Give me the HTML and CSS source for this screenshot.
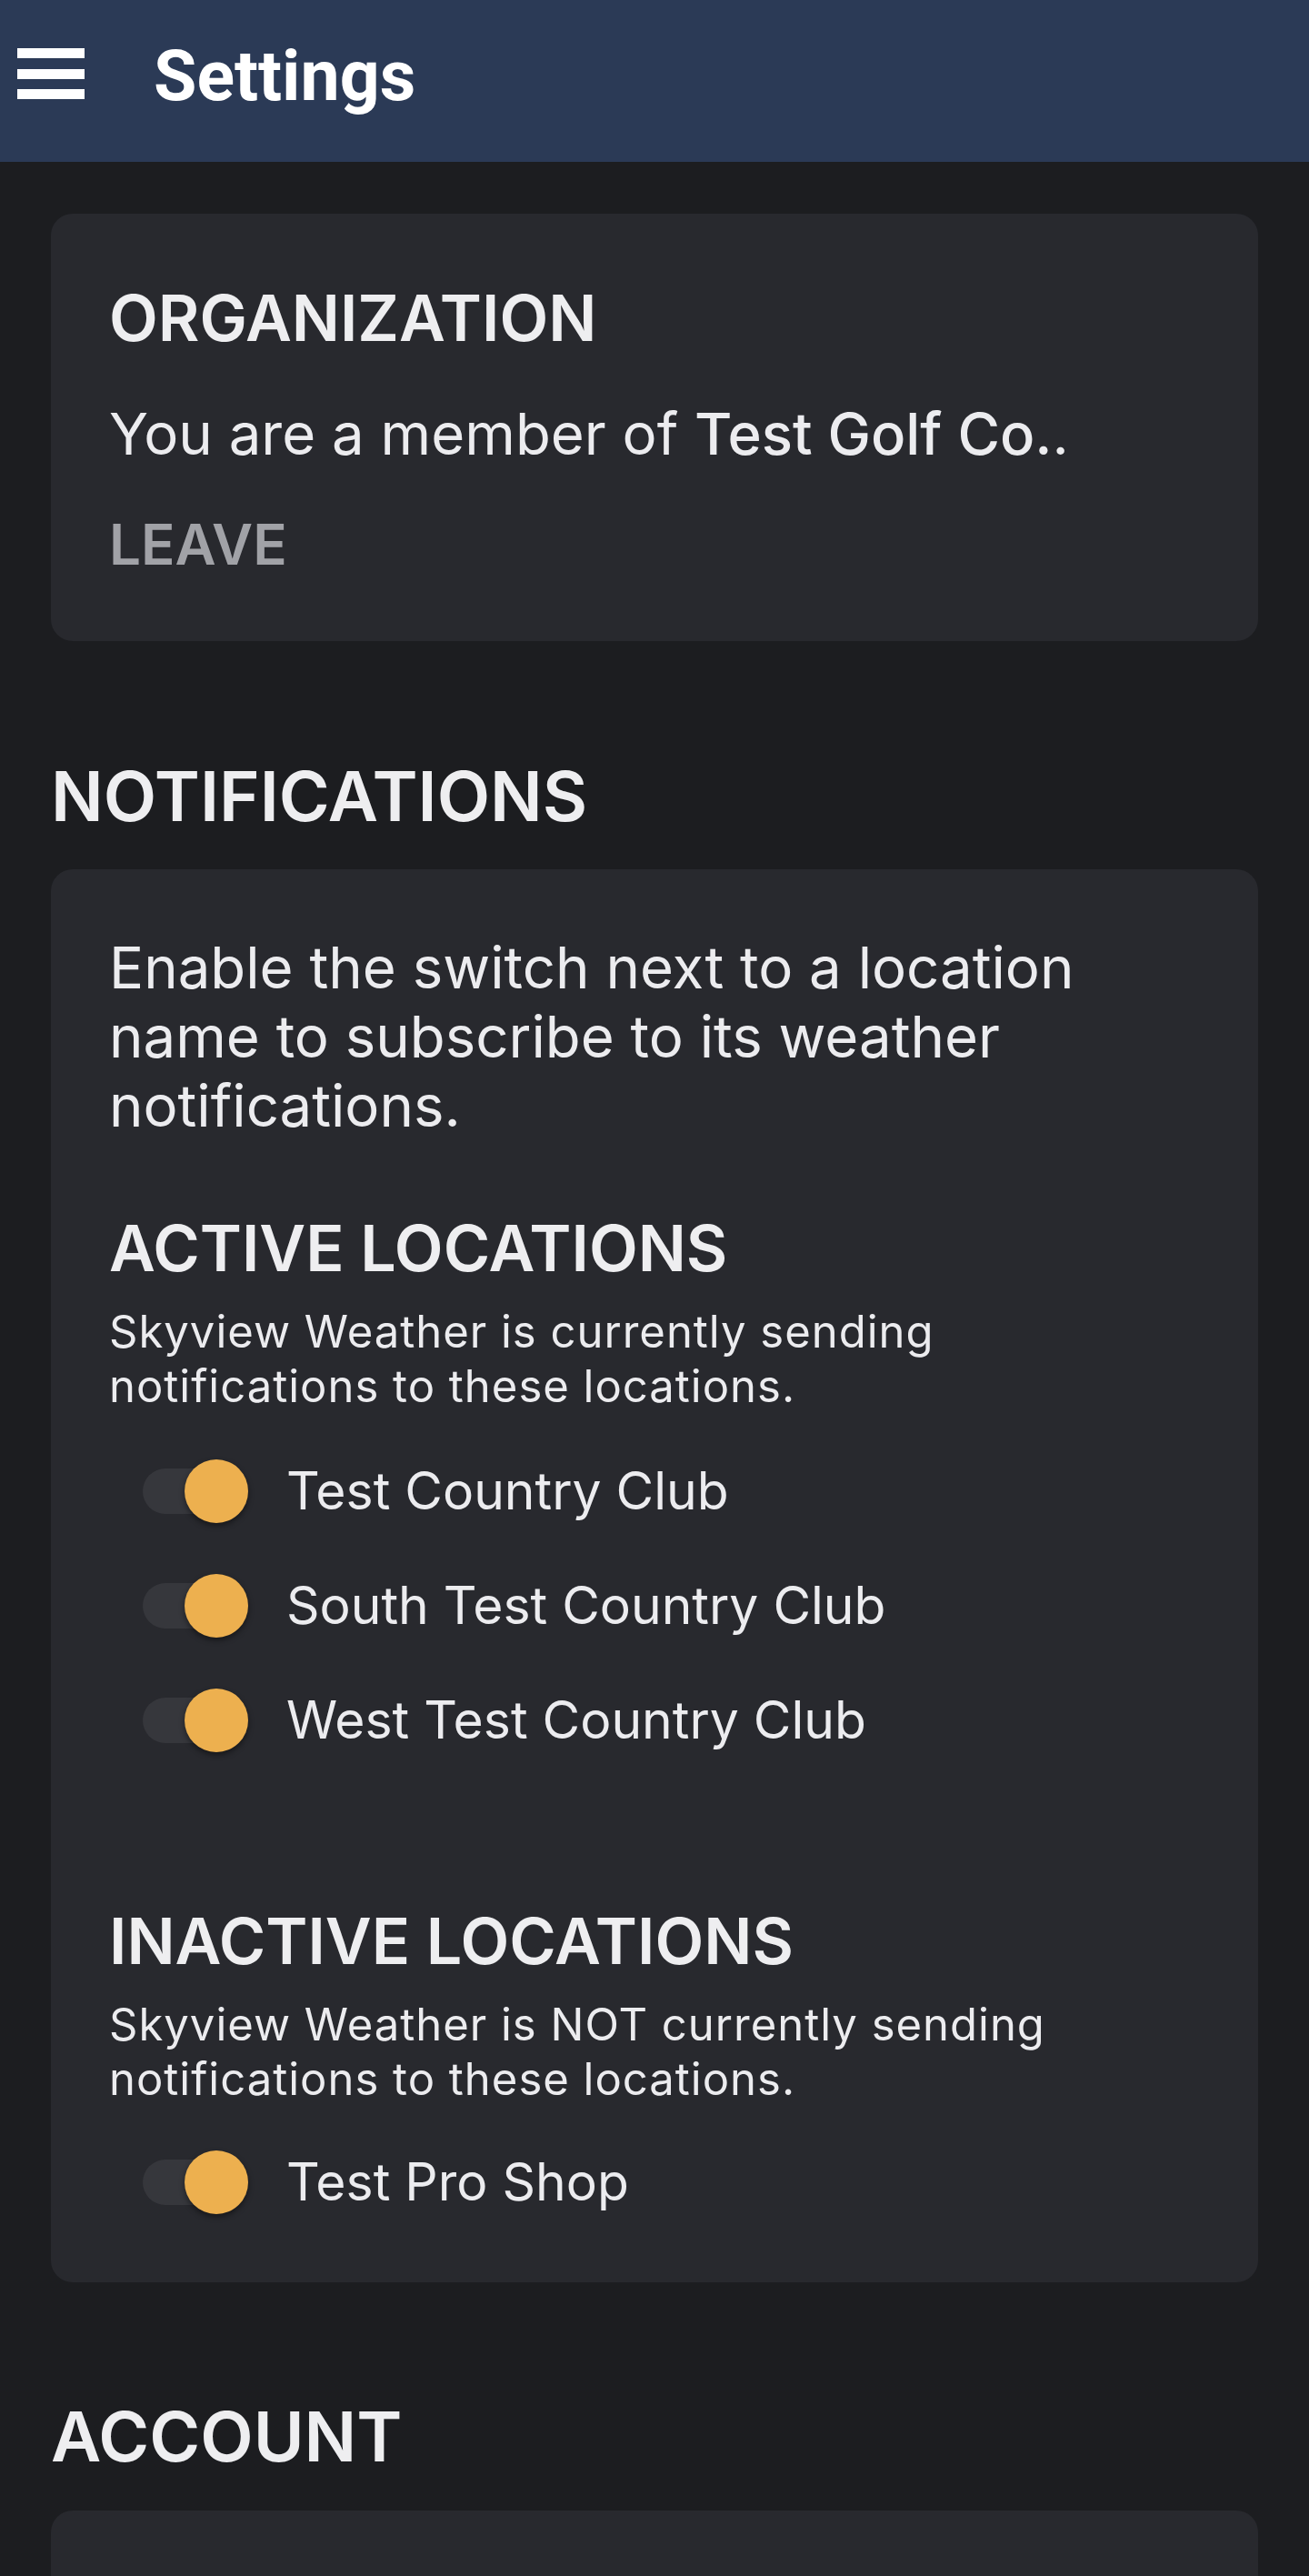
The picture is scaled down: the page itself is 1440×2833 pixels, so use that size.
FILE: index.html
```html
<!DOCTYPE html>
<html lang="en">
<head>
<meta charset="utf-8">
<title>Settings</title>
<link rel="stylesheet" href="styles.css">
</head>
<body>
<header class="topbar">
  <button class="menu-btn" aria-label="Menu">
    <svg width="74" height="56" viewBox="0 0 74 56" aria-hidden="true">
      <rect x="0" y="0" width="74" height="11" fill="#ffffff"/>
      <rect x="0" y="23" width="74" height="11" fill="#ffffff"/>
      <rect x="0" y="45" width="74" height="11" fill="#ffffff"/>
    </svg>
  </button>
  <h1 class="title">Settings</h1>
</header>

<main class="content">
  <section class="card card-org">
    <h3 class="card-heading">ORGANIZATION</h3>
    <p class="body-text org-text">You are a member of <strong class="org-name">Test Golf Co.</strong>.</p>
    <button class="leave-btn">LEAVE</button>
  </section>

  <h2 class="section-heading">NOTIFICATIONS</h2>
  <section class="card card-notif">
    <p class="body-text">Enable the switch next to a location name to subscribe to its weather notifications.</p>

    <h3 class="card-heading group-heading">ACTIVE LOCATIONS</h3>
    <p class="sub-text">Skyview Weather is currently sending notifications to these locations.</p>
    <ul class="loc-list loc-active">
      <li class="loc-row"><span class="switch"><span class="track"></span><span class="knob"></span></span><span class="loc-name">Test Country Club</span></li>
      <li class="loc-row"><span class="switch"><span class="track"></span><span class="knob"></span></span><span class="loc-name">South Test Country Club</span></li>
      <li class="loc-row"><span class="switch"><span class="track"></span><span class="knob"></span></span><span class="loc-name">West Test Country Club</span></li>
    </ul>

    <h3 class="card-heading group-heading inactive-heading">INACTIVE LOCATIONS</h3>
    <p class="sub-text">Skyview Weather is NOT currently sending notifications to these locations.</p>
    <ul class="loc-list loc-inactive">
      <li class="loc-row"><span class="switch"><span class="track"></span><span class="knob"></span></span><span class="loc-name">Test Pro Shop</span></li>
    </ul>
  </section>

  <h2 class="section-heading account-heading">ACCOUNT</h2>
  <section class="card card-account"></section>
</main>
</body>
</html>
```

FILE: styles.css
```css
* {
  box-sizing: border-box;
}

html, body {
  margin: 0;
  padding: 0;
}

body {
  background: #1c1d20;
  color: #eeeef0;
  font-family: Inter, "Noto Sans", "Liberation Sans", sans-serif;
  width: 1440px;
  overflow: hidden;
}

.topbar {
  height: 178px;
  background: #2b3a56;
  display: flex;
  align-items: center;
  padding: 0 0 10px 19px;
}

.menu-btn {
  background: none;
  border: 0;
  padding: 0;
  margin: -6px 0 0 0;
  width: 74px;
  height: 56px;
  display: block;
}

.menu-btn svg {
  display: block;
}

.title {
  margin: 0 0 0 76px;
  font-family: Roboto, "Liberation Sans", sans-serif;
  font-weight: 700;
  font-size: 77px;
  line-height: 90px;
  color: #ffffff;
}

.content {
  padding: 57px 56px 0 56px;
}

.card {
  background: #28292e;
  border-radius: 24px;
  padding: 0 64px;
}

.card-org {
  padding-top: 73px;
  padding-bottom: 68px;
}

.card-heading {
  margin: 0;
  font-size: 70px;
  line-height: 84px;
  font-weight: 600;
  color: #eeeef0;
}

.body-text {
  margin: 0;
  font-size: 63.5px;
  line-height: 76px;
  font-weight: 400;
  color: #ececef;
}

.org-text {
  margin-top: 47px;
}

.org-name {
  font-weight: 500;
}

.leave-btn {
  display: block;
  margin: 46px 0 0 0;
  padding: 0;
  background: none;
  border: 0;
  font-family: inherit;
  font-size: 62px;
  line-height: 76px;
  font-weight: 600;
  color: #a1a2a7;
}

.section-heading {
  margin: 124px 0 35px 0;
  font-size: 76px;
  line-height: 92px;
  font-weight: 600;
  color: #eeeef0;
}

.card-notif {
  padding-top: 70px;
  padding-bottom: 47px;
}

.group-heading {
  margin-top: 77px;
}

.inactive-heading {
  margin-top: 138px;
}

.sub-text {
  margin: 20px 0 0 0;
  font-size: 49px;
  line-height: 60px;
  letter-spacing: 1px;
  font-weight: 400;
  color: #ececef;
}

.loc-list {
  list-style: none;
  margin: 22px 0 0 0;
  padding: 0 0 0 37px;
}

.loc-inactive {
  margin-top: 20px;
}

.loc-row {
  height: 126px;
  display: flex;
  align-items: center;
}

.switch {
  position: relative;
  width: 116px;
  height: 70px;
  flex: none;
  display: block;
}

.track {
  position: absolute;
  left: 0;
  top: 10px;
  width: 116px;
  height: 50px;
  border-radius: 25px;
  background: #36373c;
}

.knob {
  position: absolute;
  right: 0;
  top: 0;
  width: 70px;
  height: 70px;
  border-radius: 50%;
  background: #edb04f;
  box-shadow: 0 3px 6px rgba(0, 0, 0, 0.45);
}

.loc-name {
  margin-left: 42px;
  font-size: 57px;
  line-height: 68px;
  font-weight: 400;
  color: #ececef;
}

.account-heading {
  margin-top: 123px;
  margin-bottom: 36px;
}

.card-account {
  height: 300px;
}
```
